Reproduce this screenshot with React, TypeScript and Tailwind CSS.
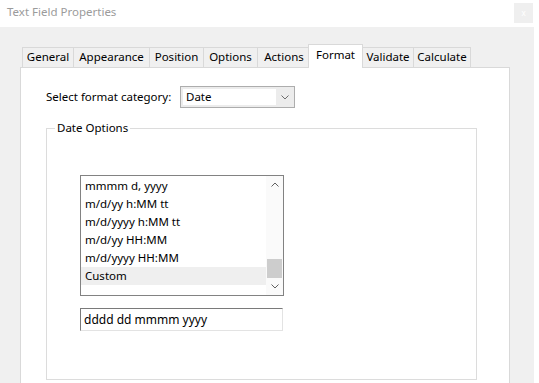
import React from "react";

const tabs = [
  { label: "General", w: "w-[51px]" },
  { label: "Appearance", w: "w-[76px]" },
  { label: "Position", w: "w-[54px]" },
  { label: "Options", w: "w-[54px]" },
  { label: "Actions", w: "w-[53px]" },
  { label: "Format", w: "w-[55px]", active: true },
  { label: "Validate", w: "w-[51px]" },
  { label: "Calculate", w: "w-[58px]", last: true },
];

const formats = [
  "mmmm d, yyyy",
  "m/d/yy h:MM tt",
  "m/d/yyyy h:MM tt",
  "m/d/yy HH:MM",
  "m/d/yyyy HH:MM",
  "Custom",
];

function Chevron({ up = false, className = "" }: { up?: boolean; className?: string }) {
  return (
    <svg width="8" height="5" viewBox="0 0 8 5" className={className}>
      <polyline
        points={up ? "0.5,4.5 4,1 7.5,4.5" : "0.5,0.5 4,4 7.5,0.5"}
        fill="none"
        stroke="currentColor"
        strokeWidth="1"
      />
    </svg>
  );
}

export default function App() {
  return (
    <div
      className="w-[539px] h-[383px] overflow-hidden bg-white flex flex-col text-[11.5px] text-black"
      style={{ fontFamily: '"Noto Sans", "Liberation Sans", sans-serif' }}
    >
      {/* title bar */}
      <div className="h-[27px] flex items-start justify-between shrink-0">
        <span className="pl-[7px] pt-[3px] text-[11.5px] text-[#9b9b9b]">Text Field Properties</span>
        <div className="mt-[3px] mr-[6px] w-[19px] h-[20px] bg-[#efefef] flex items-center justify-center text-[8px] text-white">
          x
        </div>
      </div>

      {/* dialog body */}
      <div className="w-[534px] flex-1 bg-[#f0f0f0] pt-[17px] flex flex-col">
        {/* tab strip */}
        <div className="flex items-end h-[23px] pl-[22px]">
          {tabs.map((t, i) =>
            t.active ? (
              <div
                key={t.label}
                className={`${t.w} h-[24px] -mb-px -ml-[2px] relative z-10 bg-white border-t border-l border-r border-[#d9d9d9] flex items-center justify-center pb-[3px]`}
              >
                {t.label}
              </div>
            ) : (
              <div
                key={t.label}
                className={`${t.w} h-[20px] border-t border-l border-[#d9d9d9] flex items-center justify-center pb-px ${
                  t.last ? "border-r" : ""
                } ${i === 6 ? "-ml-px" : ""}`}
              >
                {t.label}
              </div>
            )
          )}
        </div>

        {/* tab panel */}
        <div className="ml-[20px] w-[490px] h-[330px] shrink-0 bg-white border border-[#d9d9d9] pt-[18px] pl-[25px]">
          <div className="flex items-center h-[22px]">
            <span className="w-[134px]">Select format category:</span>
            <div className="w-[115px] h-[22px] border border-[#adadad] bg-[#ececec] flex items-center pl-[2px]">
              <div className="w-[93px] h-[16px] bg-white flex items-center pl-[3px]">Date</div>
              <div className="flex-1 flex justify-center text-[#6d6d6d]">
                <Chevron />
              </div>
            </div>
          </div>

          <fieldset className="mt-[12px] w-[431px] h-[260px] border border-[#dcdcdc]">
            <legend className="ml-[8px] px-[2px] leading-[16px]">Date Options</legend>

            {/* list box */}
            <div className="mt-[39px] ml-[33px] w-[204px] h-[121px] border border-[#828282] flex bg-white">
              <div className="flex-1 pt-px">
                {formats.map((f) => (
                  <div
                    key={f}
                    className={`h-[18px] leading-[18px] pl-[4px] ${f === "Custom" ? "bg-[#efefef]" : ""}`}
                  >
                    {f}
                  </div>
                ))}
              </div>
              <div className="w-[17px] flex flex-col bg-[#fafafa]">
                <div className="h-[17px] flex items-center justify-center text-[#606060]">
                  <Chevron up />
                </div>
                <div className="flex-1 flex flex-col justify-end px-px">
                  <div className="h-[19px] bg-[#cdcdcd]" />
                </div>
                <div className="h-[17px] flex items-center justify-center text-[#606060]">
                  <Chevron />
                </div>
              </div>
            </div>

            {/* custom format input */}
            <div className="mt-[12px] ml-[33px] w-[203px] h-[23px] border-t border-l border-[#7a7a7a] border-b border-r border-b-[#e3e3e3] border-r-[#e3e3e3] flex items-center pl-[3px] text-[12px]">
              dddd dd mmmm yyyy
            </div>
          </fieldset>
        </div>
      </div>
    </div>
  );
}
